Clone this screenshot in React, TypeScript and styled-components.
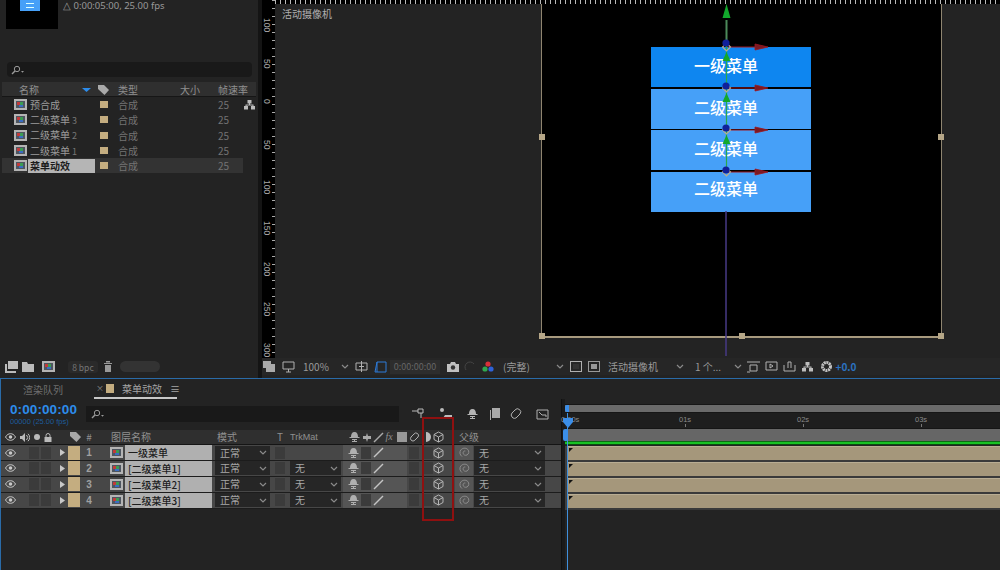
import React from "react";
import styled, { createGlobalStyle } from "styled-components";

const Global = createGlobalStyle`
  html, body { margin: 0; padding: 0; background: #151515; }
  * { box-sizing: border-box; }
  body { font-family: "Noto Sans CJK SC", "Noto Sans", sans-serif; }
`;

const C = { panel: "#232323", text: "#9a9a9a", dim: "#777", tan: "#c4ad80", blue: "#2d8ceb" };

const Page = styled.div`
  width: 1000px; height: 570px; overflow: hidden; position: relative;
  display: flex; flex-direction: column; background: #141414; color: ${C.text}; font-size: 10px;
`;
const Top = styled.div`display: flex; height: 378px; gap: 4px; flex: none;`;

/* project */
const Project = styled.section`width: 258px; background: ${C.panel}; display: flex; flex-direction: column;`;
const Info = styled.div`display: flex; height: 62px; padding-left: 6px; flex: none;`;
const Thumb = styled.div`width: 52px; height: 29px; background: #000; display: flex; justify-content: center; flex: none; padding-right: 4px;`;
const ThumbMenu = styled.div`width: 20px; height: 11px; background: #46a0f8; display: flex; flex-direction: column; justify-content: space-evenly; padding: 0 6px;
  i { display: block; height: 1px; background: #dff; }`;
const InfoText = styled.div`margin: 0 0 0 5px; font-family: "Noto Sans", sans-serif; font-size: 9.5px; line-height: 11px; color: #999; white-space: nowrap;`;
const Search = styled.div`height: 15px; margin: 0 6px 0 7px; background: #191919; border-radius: 4px; display: flex; align-items: center; padding-left: 4px; flex: none;`;
const ProjHead = styled.div`
  margin: 5px 2px 0; height: 15px; background: #2f2f2f; border-bottom: 1px solid #161616; flex: none;
  display: grid; grid-template-columns: 17px 63px 16px 20px 62px 38px 39px; align-items: center; font-size: 10px; color: #8f8f8f;
`;
const ProjRow = styled.div<{ $sel?: boolean }>`
  margin: 0 15px 0 2px; height: 15.3px; flex: none;
  background: ${(p) => (p.$sel ? "#333333" : "transparent")};
  display: grid; grid-template-columns: 12px 14px 67px 5px 8px 10px 100px 26px; align-items: center; font-size: 10px; line-height: 15px; position: relative;
`;
const ProjName = styled.div<{ $sel?: boolean }>`
  height: 14px; line-height: 14px; padding-left: 2px; white-space: nowrap;
  font-weight: ${(p) => (p.$sel ? 700 : 400)};
  background: ${(p) => (p.$sel ? "#b5b5b5" : "transparent")};
  color: ${(p) => (p.$sel ? "#1c1c1c" : "#9b9b9b")};
  small { font-size: 9px; color: #777; }
`;
const Swatch = styled.span`width: 8px; height: 7px; background: ${C.tan}; display: block;`;
const DimCell = styled.span`color: #737373; font-size: 10px;`;
const NetBadge = styled.span`position: absolute; right: -12px; top: 3px; line-height: 0;`;
const Spacer = styled.div`flex: 1;`;
const ProjFoot = styled.div`height: 17px; flex: none; display: flex; align-items: center; padding-left: 4px; margin-bottom: 3px;`;
const Bpc = styled.span`width: 30px; text-align: center; font-size: 8.5px; color: #777; background: #2a2a2a; border-radius: 3px; margin-left: 10px; flex: none;`;
const Pill = styled.span`width: 40px; height: 11px; background: #333; border-radius: 6px; margin-left: 2px; flex: none;`;

/* viewer */
const Viewer = styled.section`flex: 1; background: ${C.panel}; display: flex; flex-direction: column; min-width: 0;`;
const TopRuler = styled.div`
  height: 4px; flex: none; margin-left: 13px; background-color: #000;
  background-image: repeating-linear-gradient(90deg, #bbb 0 1px, transparent 1px 5px);
`;
const ViewBody = styled.div`flex: 1; display: flex; min-height: 0;`;
const LeftRuler = styled.div`
  width: 13px; margin-top: -4px; flex: none; background-color: #000; overflow: hidden; padding-top: 17px;
  background-image: repeating-linear-gradient(180deg, #aaa 0 1px, transparent 1px 8px);
  background-size: 3px 100%; background-repeat: no-repeat; background-position: right top;
`;
const RulerNum = styled.div`
  height: 40.6px; writing-mode: vertical-rl; font-size: 8.5px; line-height: 9px; color: #aaa; font-family: "Liberation Sans", sans-serif;
  padding-top: 1px;
`;
const Stage = styled.div`flex: 1; position: relative; min-width: 0;`;
const CamLabel = styled.div`position: absolute; left: 7px; top: 3px; font-size: 10px; color: #b0b0b0; line-height: 13px;`;
const Comp = styled.div`position: absolute; left: 266px; top: 0; width: 401px; height: 334px; background: #000; border: solid #8f8570; border-width: 0 1px 2px 1px; border-bottom-color: #a89a7e;`;
const Handle = styled.span<{ $x: number; $y: number }>`
  position: absolute; width: 6px; height: 6px; background: #b5a687;
  left: ${(p) => p.$x}%; top: ${(p) => p.$y}%; transform: translate(-50%, -50%);
`;
const Menu = styled.div`position: absolute; left: 109px; top: 43px; width: 160px; display: flex; flex-direction: column; gap: 1.5px;`;
const MenuItem = styled.div<{ $primary?: boolean; $lh: number }>`
  height: 40px; background: ${(p) => (p.$primary ? "#0e86f0" : "#46a0f8")};
  color: #fff; font-size: 16px; font-weight: 500; line-height: ${(p) => p.$lh}px; text-align: center; padding-right: 10px;
`;
const Gizmo = styled.svg`position: absolute; left: 0; top: 0; pointer-events: none;`;

const ViewBar = styled.div`height: 17px; flex: none; background: #262626; display: flex; align-items: center; font-size: 10px; color: #9a9a9a; margin-bottom: 3px;`;
const Cell = styled.div<{ $w: number; $pl?: number }>`
  width: ${(p) => p.$w}px; flex: none; display: flex; align-items: center; white-space: nowrap; height: 100%;
  justify-content: ${(p) => (p.$pl !== undefined ? "flex-start" : "center")};
  padding-left: ${(p) => p.$pl ?? 0}px;
`;
const TimeBox = styled.span`width: 50px; height: 14px; line-height: 14px; text-align: center; font-size: 9px; color: #666; background: #2d2d2d;`;
const Plus = styled.span`color: #2c72c0; font-size: 10px; font-weight: 700;`;

/* timeline */
const Timeline = styled.section`
  height: 192px; flex: none; background: ${C.panel}; border-top: 1px solid #2a6ba8; border-left: 1px solid #2a6ba8;
  display: flex; flex-direction: column; position: relative;
`;
const Tabs = styled.div`height: 20px; flex: none; display: flex; align-items: center; font-size: 10px; position: relative; padding-left: 22px;`;
const TabOff = styled.span`width: 71px; color: #6e6e6e; flex: none;`;
const TabOn = styled.div`
  width: 83px; height: 20px; display: flex; align-items: center; border-bottom: 2px solid #c8c8c8; color: #a5a5a5; padding-left: 2px; gap: 5px; white-space: nowrap; flex: none;
`;
const TabX = styled.span`font-size: 8px; color: #888; width: 5px; flex: none; line-height: 10px;`;
const TabSwatch = styled.span`width: 8px; height: 9px; background: ${C.tan}; flex: none;`;
const TabText = styled.span`margin-left: 3px; flex: none;`;
const TimelineMain = styled.div`flex: 1; display: flex; min-height: 0;`;
const LeftPane = styled.div`width: 560px; flex: none; display: flex; flex-direction: column;`;
const Tools = styled.div`height: 31px; flex: none; display: flex; align-items: flex-start; padding-top: 7px; position: relative;`;
const TimeBlock = styled.div`width: 85px; padding-left: 9px; flex: none; margin-top: -4px;`;
const Time = styled.div`font-family: "Liberation Sans", sans-serif; font-weight: 700; font-size: 13.5px; line-height: 15px; color: #2d8ceb; letter-spacing: 0.1px;`;
const TimeSub = styled.div`font-family: "Liberation Sans", sans-serif; font-size: 7.5px; line-height: 9px; color: #1d5c9c;`;
const TlSearch = styled.div`width: 313px; height: 16px; background: #191919; flex: none; display: flex; align-items: center; padding-left: 5px; margin-right: 7px;`;
const ToolIcons = styled.div`display: flex; align-items: center; height: 16px;`;

const COLS = "27px 28px 12px 15px 23px 19px 87px 60px 16px 55px 112px 18px 74px 14px";
const ColHead = styled.div`
  height: 15px; flex: none; background: #2f2f2f; border-bottom: 1px solid #151515;
  display: grid; grid-template-columns: ${COLS}; align-items: center; font-size: 10px; color: #8f8f8f; line-height: 14px;
`;
const LayerRow = styled.div`
  height: 15.9px; flex: none; background: #474747; border-bottom: 1px solid #1c1c1c;
  display: grid; grid-template-columns: ${COLS}; align-items: center; font-size: 10px; color: #a8a8a8;
`;
const HeadAv = styled.div`display: flex; align-items: center; gap: 4px; margin-left: -8px;`;
const HeadEye = styled.div`padding-left: 4px;`;
const HeadIcons = styled.div`display: flex; align-items: center; padding-left: 6px; color: #8f8f8f;
  & > * { margin-right: 1.5px; }`;
const Fx = styled.span`font-style: italic; font-size: 10px; font-family: "Liberation Serif", serif; width: 10px;`;
const Center = styled.div`display: flex; align-items: center; justify-content: center; height: 100%;`;
const Start = styled.div<{ $pl: number }>`display: flex; align-items: center; height: 100%; padding-left: ${(p) => p.$pl}px;`;
const Boxes = styled.div`display: flex; gap: 2px; padding-left: 1px;`;
const DarkBox = styled.span<{ $w?: number }>`display: block; width: ${(p) => p.$w ?? 10}px; height: 12px; background: #3b3b3b; flex: none;`;
const Label = styled.span`display: block; width: 12px; height: 14px; background: ${C.tan};`;
const HashHead = styled.div`text-align: center; padding-right: 11px;`;
const Num = styled.div`font-family: "Liberation Sans", sans-serif; font-weight: 700; text-align: center; font-size: 10px; color: #a0a0a0; padding-right: 11px;`;
const NameHead = styled.span`margin-left: -14px; white-space: nowrap;`;
const ModeHead = styled.span`padding-left: 5px;`;
const TrkHead = styled.span`padding-left: 2px; font-family: "Liberation Sans", sans-serif; font-size: 9px;`;
const ParentHead = styled.span`margin-left: -14px; white-space: nowrap;`;
const NameCell = styled.div`
  height: 100%; background: #b0b0b0; color: #1d1d1d; font-weight: 500; padding-left: 3px; line-height: 15px; white-space: nowrap; font-size: 10px;
`;
const SelectWrap = styled.div<{ $pl?: number }>`padding-left: ${(p) => p.$pl ?? 3}px; padding-right: 2px; height: 100%; display: flex; align-items: center;`;
const Select = styled.div`
  flex: 1; height: 14px; background: #262626; display: flex; align-items: center; justify-content: space-between; padding: 0 3px 0 5px; color: #a8a8a8; font-size: 10px; line-height: 14px;
`;
const Switches = styled.div`height: 100%; display: flex; align-items: center; position: relative;`;
const SwitchLight = styled.div`height: 100%; width: 64px; background: #555; display: flex; align-items: center; padding-left: 5px; gap: 2px; flex: none;`;
const SwitchRest = styled.div`display: flex; align-items: center; padding-left: 2px;
  & > span + span { margin-left: 5px; }`;
const PickCell = styled(Center)`background: #555;`;
const LeftEmpty = styled.div`flex: 1;`;

const Splitter = styled.div`width: 4px; flex: none; background: #1a1a1a; border-left: 1px solid #111;`;
const RightPane = styled.div`flex: 1; display: flex; flex-direction: column; min-width: 0; position: relative;`;
const RangeRow = styled.div`height: 9px; margin-top: 5px; flex: none; background: #6a6a6a; border-top: 1px solid #161616; border-bottom: 1px solid #161616;`;
const TimeRuler = styled.div`height: 16px; flex: none; display: flex; background: #1e1e1e; border-bottom: 1px solid #151515;`;
const Tick = styled.div`
  width: 118px; flex: none; font-family: "Liberation Sans", sans-serif; font-size: 7.5px; color: #8a8a8a; line-height: 9px; padding-top: 2px;
  display: flex; flex-direction: column; align-items: flex-start;
  i { display: block; width: 1px; height: 3px; margin: 0 0 0 6px; background: #777; }
  &:first-child { margin-left: -4px; }
`;
const WorkArea = styled.div`height: 12px; flex: none; background: #666;`;
const GreenBar = styled.div`height: 4px; flex: none; background: #18c224; border-bottom: 1px solid #0d4a12; border-top: 1px solid #0c6a14; margin-bottom: 1px;`;
const TrackBar = styled.div`
  height: 16px; flex: none; border-top: 1px solid #b9ad93; border-bottom: 2px solid #3a3a3a; background: #a5977b; margin-left: 3px; position: relative;
  box-shadow: -3px 0 0 #404040;
  &::before { content: ""; position: absolute; left: 1px; top: 1px; border: 2px solid transparent; border-top-color: #111; border-left-color: #111; }
`;
const CurrentLine = styled.div`position: absolute; left: 2px; top: 14px; bottom: 0; width: 1px; background: #3f8fdc;`;
const RangeKnob = styled.span`position: absolute; left: 0; top: 6px; width: 4px; height: 7px; background: #3b8ee8; border-radius: 2px 0 0 2px;`;
const WorkKnob = styled.span`position: absolute; left: -2px; top: 30px; width: 5px; height: 12px; background: #3b8ee8; border-radius: 2px;`;
const Playhead = styled.span`
  position: absolute; left: -2px; top: 19px; width: 10px; height: 10px; background: #3b8ee8;
  clip-path: polygon(0 0, 100% 0, 100% 40%, 50% 100%, 0 40%);
`;
const RedBox = styled.div`position: absolute; left: 421px; top: 38px; width: 32px; height: 104px; border: 2px solid #8f1010; pointer-events: none;`;

/* icons */
const Ic = styled.svg`display: block; flex: none;`;
const stroke = { fill: "none", stroke: "currentColor", strokeWidth: 1 } as const;

const CompIcon = () => (
  <Ic width="13" height="11" viewBox="0 0 13 11">
    <rect width="13" height="11" fill="#b4b4b4" />
    <rect x="2" y="2" width="9" height="7" fill="#4e5660" />
    <rect x="3" y="3" width="3" height="3" fill="#c23a3a" />
    <rect x="6" y="3" width="3" height="3" fill="#3a9c52" />
    <rect x="5" y="6" width="4" height="2" fill="#3a6cc2" />
  </Ic>
);
const SearchIcon = () => (
  <Ic width="14" height="10" viewBox="0 0 14 10" style={{ color: "#999" }}>
    <circle cx="6" cy="4" r="2.7" {...stroke} />
    <path d="M4 6 1 9" {...stroke} strokeWidth={1.5} />
    <path d="M10 6h3l-1.500 1.700z" fill="currentColor" />
  </Ic>
);
const Network = ({ c = "#bdbdbd" }: { c?: string }) => (
  <Ic width="11" height="10" viewBox="0 0 11 10" fill={c}>
    <rect x="3.500" y="0" width="4" height="3.500" />
    <rect x="0" y="6" width="4" height="3.500" />
    <rect x="7" y="6" width="4" height="3.500" />
    <path d="M5 3h1v1.500h3.500V6h-1V5.500h-6V6h-1V4.500H5z" />
  </Ic>
);
const Eye = () => (
  <Ic width="11" height="8" viewBox="0 0 11 8">
    <path d="M.5 4C2 1.500 3.700.7 5.500.7S9 1.500 10.500 4C9 6.500 7.300 7.300 5.500 7.300S2 6.500.5 4z" fill="none" stroke="#c9c9c9" />
    <circle cx="5.500" cy="4" r="1.800" fill="#c9c9c9" />
  </Ic>
);
const Arrow = () => (
  <Ic width="5" height="7" viewBox="0 0 5 7"><path d="M0 0l5 3.500L0 7z" fill="#c8c8c8" /></Ic>
);
const Chevron = ({ c = "#8a8a8a" }: { c?: string }) => (
  <Ic width="8" height="5" viewBox="0 0 8 5"><path d="M1 1l3 3 3-3" fill="none" stroke={c} strokeWidth="1.200" /></Ic>
);
const Cube = () => (
  <Ic width="11" height="12" viewBox="0 0 11 12" style={{ color: "#b4b4b4" }}>
    <path d="M5.500 1 10 3.500v5L5.500 11 1 8.500v-5zM1 3.500 5.500 6 10 3.500M5.500 6v5" {...stroke} />
  </Ic>
);
const Spiral = () => (
  <Ic width="11" height="11" viewBox="0 0 11 11">
    <path d="M3 9.500C.8 8 .3 5 1.800 3 3.500.8 7 .6 8.800 2.500c1.600 1.700 1.200 4.500-.8 5.500-1.700.8-3.600-.1-3.900-1.800-.2-1.400 1-2.500 2.200-2.200" fill="none" stroke="#8d8d8d" />
  </Ic>
);
const Shy = ({ c = "#b0b0b0" }: { c?: string }) => (
  <Ic width="11" height="10" viewBox="0 0 11 10">
    <path d="M5.500 0C8 0 9 2 9 5h1.500v1h-10V5H2C2 2 3 0 5.500 0z" fill={c} />
    <path d="M3 7h5v1H6v1h2v1H3V9h2V8H3z" fill={c} />
  </Ic>
);
const Pen = ({ c = "#c4c4c4" }: { c?: string }) => (
  <Ic width="11" height="11" viewBox="0 0 11 11"><path d="M1 10 10 1" stroke={c} strokeWidth="1.400" /></Ic>
);
const Tag = () => (
  <Ic width="11" height="10" viewBox="0 0 11 10"><path d="M0 0h6l5 5-4.500 5L0 4z" fill="#a9a9a9" /></Ic>
);
const Lock = () => (
  <Ic width="8" height="9" viewBox="0 0 8 9">
    <rect x="0.500" y="4" width="7" height="5" fill="#bbb" />
    <path d="M2 4V2.500a2 2 0 0 1 4 0V4" fill="none" stroke="#bbb" />
  </Ic>
);
const Speaker = () => (
  <Ic width="10" height="9" viewBox="0 0 10 9">
    <path d="M0 3h2l3-3v9L2 6H0z" fill="#bbb" /><path d="M6.500 2a3.500 3.500 0 0 1 0 5M8 .8a5 5 0 0 1 0 7.400" fill="none" stroke="#bbb" />
  </Ic>
);
const Dot = () => <Ic width="6" height="6" viewBox="0 0 6 6"><circle cx="3" cy="3" r="3" fill="#bbb" /></Ic>;
const Square = ({ dark, c = "#b0b0b0" }: { dark?: boolean; c?: string }) => (
  <Ic width="12" height="11" viewBox="0 0 12 11">
    <rect x=".5" y=".5" width="11" height="10" fill="none" stroke={c} />
    <rect x="3" y="3" width="6" height="5" fill={dark ? "#333" : c} />
  </Ic>
);
const Camera = () => (
  <Ic width="12" height="10" viewBox="0 0 12 10">
    <path d="M0 2h3l1-2h4l1 2h3v8H0z" fill="#c0c0c0" /><circle cx="6" cy="5.500" r="2.200" fill="#333" />
  </Ic>
);
const Rgb = () => (
  <Ic width="12" height="12" viewBox="0 0 12 12">
    <circle cx="6" cy="3" r="2.600" fill="#d8303a" /><circle cx="3" cy="8" r="2.600" fill="#2fa84f" /><circle cx="9" cy="8" r="2.600" fill="#2f62d8" />
  </Ic>
);
const Gear = () => (
  <Ic width="13" height="13" viewBox="0 0 13 13">
    <circle cx="6.500" cy="6.500" r="4" fill="none" stroke="#c4c4c4" strokeWidth="3" strokeDasharray="2 .6" />
  </Ic>
);
const LinesIcon = ({ d, c = "#b0b0b0", w = 13, h = 12 }: { d: string; c?: string; w?: number; h?: number }) => (
  <Ic width={w} height={h} viewBox={`0 0 ${w} ${h}`}><path d={d} fill="none" stroke={c} /></Ic>
);
const FilledIcon = ({ d, c = "#bbb", w = 13, h = 12 }: { d: string; c?: string; w?: number; h?: number }) => (
  <Ic width={w} height={h} viewBox={`0 0 ${w} ${h}`}><path d={d} fill={c} /></Ic>
);

const projectRows = [
  { name: "预合成" },
  { name: "二级菜单", n: "3" },
  { name: "二级菜单", n: "2" },
  { name: "二级菜单", n: "1" },
  { name: "菜单动效", sel: true },
];
const layers = [
  { n: 1, name: "一级菜单", mat: false },
  { n: 2, name: "[二级菜单1]", mat: true },
  { n: 3, name: "[二级菜单2]", mat: true },
  { n: 4, name: "[二级菜单3]", mat: true },
];
const anchors = [43, 84, 126, 168];
const rulerNums = ["100", "50", "0", "50", "100", "150", "200", "250", "300"];

const Overlay = () => (
  <Gizmo width="401" height="355" viewBox="0 0 401 355">
    <path d="M184.500 16V43" stroke="#4c8a5a" strokeWidth="2" />
    <path d="M184.500 43V168" stroke="#2aa84a" strokeWidth="1.200" />
    <path d="M184 207V352" stroke="#473a86" strokeWidth="1.500" />
    <path d="M184.500 0l4 14h-8z" fill="#12a82c" />
    {anchors.map((y, i) => (
      <g key={y}>
        <path d={`M186 ${y}H215`} stroke="#a01820" strokeWidth="1" />
        <path d={`M213 ${y - 3}l13 3-13 3z`} fill="#7a1a24" stroke="#a01820" strokeWidth=".8" />
        {i < 3 && <path d={`M184.500 ${y + 5}l4 9h-8z`} fill="#12a82c" />}
        <path d={`M184.500 ${y - 4}l4 4-4 4-4-4z`} fill="none" stroke="#b8ab90" strokeWidth="1.200" />
        <circle cx="184" cy={y - (i === 0 ? 4 : 2)} r="3.600" fill="#10209a" />
      </g>
    ))}
  </Gizmo>
);

export default function App() {
  return (
    <Page>
      <Global />
      <Top>
        <Project>
          <Info>
            <Thumb>
              <ThumbMenu><i /><i /></ThumbMenu>
            </Thumb>
            <InfoText>△ 0:00:05:00, 25.00 fps</InfoText>
          </Info>
          <Search><SearchIcon /></Search>
          <ProjHead>
            <span />
            <span>名称</span>
            <FilledIcon d="M0 0h9L4.500 4z" c="#2d8ceb" w={9} h={4} />
            <Tag />
            <span>类型</span>
            <span>大小</span>
            <span>帧速率</span>
          </ProjHead>
          {projectRows.map((r) => (
            <ProjRow key={r.name + r.n} $sel={r.sel}>
              <span />
              <CompIcon />
              <ProjName $sel={r.sel}>
                {r.name}
                {r.n && <small> {r.n}</small>}
              </ProjName>
              <span />
              <Swatch />
              <span />
              <DimCell>合成</DimCell>
              <DimCell>25</DimCell>
              {!r.n && !r.sel && <NetBadge><Network /></NetBadge>}
            </ProjRow>
          ))}
          <Spacer />
          <ProjFoot>
            <Cell $w={14}><FilledIcon d="M0 3h2v7h9v2H0zM3 0h10v8H3z" w={13} /></Cell>
            <Cell $w={20}><FilledIcon d="M0 1h5l1 2h6v8H0z" w={12} /></Cell>
            <Cell $w={20}><CompIcon /></Cell>
            <Bpc>8 bpc</Bpc>
            <Cell $w={20}><FilledIcon d="M1 2h8v1H1zM3 0h4v1.500H3zM2 4h6v7H2z" w={10} c="#999" /></Cell>
            <Pill />
          </ProjFoot>
        </Project>

        <Viewer>
          <TopRuler />
          <ViewBody>
            <LeftRuler>
              {rulerNums.map((n, i) => <RulerNum key={i}>{n}</RulerNum>)}
            </LeftRuler>
            <Stage>
              <CamLabel>活动摄像机</CamLabel>
              <Comp>
                <Menu>
                  <MenuItem $primary $lh={37}>一级菜单</MenuItem>
                  <MenuItem $lh={37}>二级菜单</MenuItem>
                  <MenuItem $lh={36}>二级菜单</MenuItem>
                  <MenuItem $lh={33}>二级菜单</MenuItem>
                </Menu>
                <Handle $x={0} $y={40} />
                <Handle $x={100} $y={40} />
                <Handle $x={0} $y={100} />
                <Handle $x={50} $y={100} />
                <Handle $x={100} $y={100} />
                <Overlay />
              </Comp>
            </Stage>
          </ViewBody>
          <ViewBar>
            <Cell $w={14}><FilledIcon d="M0 0h8v7H0zM3 3h9v8H3z" c="#aaa" w={12} /></Cell>
            <Cell $w={24}><LinesIcon d="M1 1h11v7H1zM4 11h5M6.500 8v3" /></Cell>
            <Cell $w={41} $pl={3}>100%</Cell>
            <Cell $w={8}><Chevron /></Cell>
            <Cell $w={24}><LinesIcon d="M1 2h11v7H1zM6.500 0v11M4 5.500h5" /></Cell>
            <Cell $w={14}><LinesIcon d="M3 1h9v10H1zM3 1v10" c="#2d7ad8" /></Cell>
            <Cell $w={56}><TimeBox>0:00:00:00</TimeBox></Cell>
            <Cell $w={20}><Camera /></Cell>
            <Cell $w={14}><LinesIcon d="M2 9a4 4 0 0 1 8-6" c="#444" /></Cell>
            <Cell $w={22}><Rgb /></Cell>
            <Cell $w={54} $pl={4}>(完整)</Cell>
            <Cell $w={13}><Chevron /></Cell>
            <Cell $w={20}><Square dark /></Cell>
            <Cell $w={15}><Square c="#999" /></Cell>
            <Cell $w={71} $pl={7}>活动摄像机</Cell>
            <Cell $w={15}><Chevron /></Cell>
            <Cell $w={43} $pl={8}>1 个...</Cell>
            <Cell $w={16}><Chevron /></Cell>
            <Cell $w={14}><LinesIcon d="M0 1h13M3 4h7v6H3zM0 11h3" /></Cell>
            <Cell $w={22}><LinesIcon d="M1 1h11v8H1zM5 3v4l3-2z" /></Cell>
            <Cell $w={14}><LinesIcon d="M1 4v6h11V4M5 7V1h3v6" /></Cell>
            <Cell $w={22}><Network /></Cell>
            <Cell $w={16}><Gear /></Cell>
            <Cell $w={24}><Plus>+0.0</Plus></Cell>
          </ViewBar>
        </Viewer>
      </Top>

      <Timeline>
        <Tabs>
          <TabOff>渲染队列</TabOff>
          <TabOn>
            <TabX>×</TabX>
            <TabSwatch />
            <TabText>菜单动效</TabText>
            <TabText>≡</TabText>
          </TabOn>
        </Tabs>
        <TimelineMain>
          <LeftPane>
            <Tools>
              <TimeBlock>
                <Time>0:00:00:00</Time>
                <TimeSub>00000 (25.00 fps)</TimeSub>
              </TimeBlock>
              <TlSearch><SearchIcon /></TlSearch>
              <ToolIcons>
                <Cell $w={24}><LinesIcon d="M0 3h6M6 1h5v4H6zM9 5v5" c="#bbb" /></Cell>
                <Cell $w={30}><FilledIcon d="M1 2a2 2 0 1 1 4 0 2 2 0 1 1-4 0zM6 7h7v3H4z" /></Cell>
                <Cell $w={25}><Shy c="#b5b5b5" /></Cell>
                <Cell $w={20}><FilledIcon d="M3 0h8v10H3zM1 2h1v10h8v1H1z" c="#aaa" /></Cell>
                <Cell $w={22}><LinesIcon d="M2 9a3 3 0 0 1 0-4l3-3a3 3 0 0 1 5 4l-3 3a3 3 0 0 1-5 0z" /></Cell>
                <Cell $w={30}><LinesIcon d="M1 2h11v9H1zM3 4l3 3h4v2" /></Cell>
              </ToolIcons>
            </Tools>
            <ColHead>
              <HeadEye><Eye /></HeadEye>
              <HeadAv><Speaker /><Dot /><Lock /></HeadAv>
              <span />
              <Center><Tag /></Center>
              <HashHead>#</HashHead>
              <span />
              <NameHead>图层名称</NameHead>
              <ModeHead>模式</ModeHead>
              <ModeHead>T</ModeHead>
              <TrkHead>TrkMat</TrkHead>
              <HeadIcons>
                <Shy c="#aaa" />
                <FilledIcon d="M5 0l1 3h3v3H6l-1 3-1-3H1V3h3z" w={10} h={9} c="#aaa" />
                <Pen c="#aaa" />
                <Fx>fx</Fx>
                <FilledIcon d="M0 0h10v10H0z" w={10} h={10} c="#999" />
                <LinesIcon d="M2 8a2.500 2.500 0 0 1 0-3l3-3a2.500 2.500 0 0 1 4 3L6 8a2.500 2.500 0 0 1-4 0z" w={11} h={10} />
                <FilledIcon d="M5 0a5 5 0 1 1 0 10z" w={10} h={10} />
                <Cube />
              </HeadIcons>
              <span />
              <ParentHead>父级</ParentHead>
              <span />
            </ColHead>
            {layers.map((l) => (
              <LayerRow key={l.n}>
                <Start $pl={4}><Eye /></Start>
                <Boxes><DarkBox /><DarkBox /></Boxes>
                <Start $pl={4}><Arrow /></Start>
                <Label />
                <Num>{l.n}</Num>
                <Start $pl={4}><CompIcon /></Start>
                <NameCell>{l.name}</NameCell>
                <SelectWrap>
                  <Select>正常<Chevron /></Select>
                </SelectWrap>
                <Center><DarkBox /></Center>
                {l.mat ? (
                  <SelectWrap $pl={2}>
                    <Select>无<Chevron /></Select>
                  </SelectWrap>
                ) : <span />}
                <Switches>
                  <SwitchLight>
                    <Shy />
                    <DarkBox />
                    <Pen />
                  </SwitchLight>
                  <SwitchRest>
                    <DarkBox />
                    <DarkBox $w={9} />
                    <Cube />
                  </SwitchRest>
                </Switches>
                <PickCell><Spiral /></PickCell>
                <SelectWrap $pl={1}>
                  <Select>无<Chevron /></Select>
                </SelectWrap>
                <span />
              </LayerRow>
            ))}
            <LeftEmpty />
          </LeftPane>
          <Splitter />
          <RightPane>
            <RangeRow />
            <TimeRuler>
              <Tick>0:00s<i /></Tick>
              <Tick>01s<i /></Tick>
              <Tick>02s<i /></Tick>
              <Tick>03s<i /></Tick>
            </TimeRuler>
            <WorkArea />
            <GreenBar />
            <TrackBar /><TrackBar /><TrackBar /><TrackBar />
            <CurrentLine />
            <RangeKnob />
            <WorkKnob />
            <Playhead />
          </RightPane>
        </TimelineMain>
        <RedBox />
      </Timeline>
    </Page>
  );
}
